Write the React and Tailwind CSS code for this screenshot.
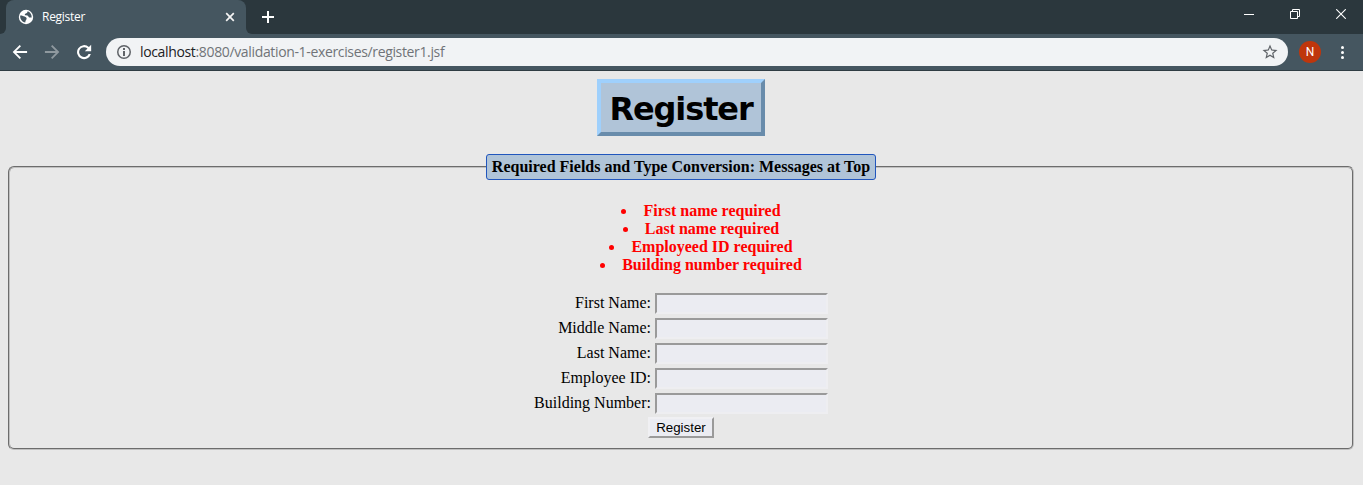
const messages = [
  'First name required',
  'Last name required',
  'Employeed ID required',
  'Building number required',
];

const fields = ['First Name:', 'Middle Name:', 'Last Name:', 'Employee ID:', 'Building Number:'];

function TabStrip() {
  return (
    <div className="flex h-[34px] items-stretch bg-[#2b373d]">
      <div className="flex w-1.5 items-end bg-[#455660]">
        <div className="h-full w-full rounded-br-md bg-[#2b373d]" />
      </div>
      <div className="flex w-60 items-center rounded-t-lg bg-[#455660] pr-[11px] pl-3">
        <svg className="h-4 w-4" viewBox="0 0 16 16">
          <circle cx="8" cy="8" r="7.2" fill="#fff" />
          <path
            d="M2.2 6.6 C4 6.4 5.4 7.3 6.6 7.6 C8 8 8.8 8.8 8.6 10 C8.4 11 7.4 11 7.3 13.6 C4 13.1 1.8 10 2.2 6.6Z M9.6 2.3 C9.6 4 8.4 4.5 6.8 5 L7 6.3 C8.4 6.4 10 6.4 10.4 7.4 C10.8 8.6 12.4 8.8 13.7 8.4 C13.8 5.3 12 3 9.6 2.3Z"
            fill="#455660"
          />
        </svg>
        <span className="ml-2 flex-1 font-['Open_Sans','Noto_Sans',sans-serif] text-[12px] tracking-[-0.27px] text-white">
          Register
        </span>
        <svg className="h-2.5 w-2.5" viewBox="0 0 10 10" stroke="#f5f5f5" strokeWidth="1.7">
          <path d="M1.2 1.2 8.8 8.8M8.8 1.2 1.2 8.8" />
        </svg>
      </div>
      <div className="flex w-1.5 bg-[#455660]">
        <div className="h-full w-full rounded-bl-md bg-[#2b373d]" />
      </div>
      <svg className="mt-[11px] ml-[10px] h-3 w-3" viewBox="0 0 12 12" fill="#fff">
        <path d="M5 0h2v5h5v2H7v5H5V7H0V5h5z" />
      </svg>
      <div className="flex-1" />
      <div className="flex items-start">
        <div className="mt-[14px] mr-9 h-px w-2.5 bg-white" />
        <svg className="mt-[9px] mr-9 h-2.5 w-2.5" viewBox="0 0 10 10" fill="none" stroke="#fff">
          <path d="M.5 2.5h7v7h-7zM2.5 2.5v-2h7v7h-2" />
        </svg>
        <svg className="mt-[9px] mr-[17px] h-2.5 w-2.5" viewBox="0 0 10 10" stroke="#fff" strokeWidth="1.1">
          <path d="M.2.2l9.6 9.6M9.8.2.2 9.8" />
        </svg>
      </div>
    </div>
  );
}

function Toolbar() {
  return (
    <div className="flex h-[37px] items-center border-b border-[#2f3c43] bg-[#455660]">
      <svg className="ml-[10px] h-5 w-5" viewBox="0 0 24 24" fill="#fff">
        <path d="M20.5 10.9H7.5l5.7-5.7L11.6 3.6 3.2 12l8.4 8.4 1.6-1.6-5.7-5.7h13z" />
      </svg>
      <svg className="ml-3 h-5 w-5" viewBox="0 0 24 24" fill="#8f999f">
        <path d="M3.5 10.9h13l-5.7-5.7 1.6-1.6 8.4 8.4-8.4 8.4-1.6-1.6 5.7-5.7h-13z" />
      </svg>
      <svg className="ml-3 h-5 w-5" viewBox="0 0 24 24" fill="#fff">
        <path d="M17.9 6.1A8.4 8.4 0 1 0 20.2 14.3h-2.7a5.9 5.9 0 1 1-1.3-6.4L13 11.1h7.6V3.4z" />
      </svg>
      <div className="ml-3 flex h-7 w-[1182px] items-center rounded-full bg-[#f1f3f5] pr-[9px] pl-[10px]">
        <svg className="h-4 w-4" viewBox="0 0 16 16" fill="#5f6368">
          <path d="M8 1a7 7 0 1 0 0 14A7 7 0 0 0 8 1zm0 1.5a5.5 5.5 0 1 1 0 11A5.5 5.5 0 0 1 8 2.5z" />
          <path d="M7 4h2v2H7zM7 7h2v5H7z" />
        </svg>
        <span className="ml-2 flex-1 pb-px font-['Open_Sans','Noto_Sans',sans-serif] text-[14px] tracking-[-0.35px] text-[#707378]">
          <span className="text-[#202124]">localhost</span>:8080/validation-1-exercises/register1.jsf
        </span>
        <svg className="h-[18px] w-[18px]" viewBox="0 0 24 24" fill="#5f6368">
          <path d="M22 9.24l-7.19-.62L12 2 9.19 8.63 2 9.24l5.46 4.73L5.82 21 12 17.27 18.18 21l-1.63-7.03L22 9.24zM12 15.4l-3.76 2.27 1-4.28-3.32-2.88 4.38-.38L12 6.1l1.71 4.04 4.38.38-3.32 2.88 1 4.28L12 15.4z" />
        </svg>
      </div>
      <div className="ml-[11px] flex h-[22px] w-[22px] items-center justify-center rounded-full bg-[#bf360c] font-[Roboto,sans-serif] text-[12px] text-white">
        N
      </div>
      <div className="ml-[20px] flex flex-col gap-[2px]">
        <div className="h-[3px] w-[3px] rounded-full bg-white" />
        <div className="h-[3px] w-[3px] rounded-full bg-white" />
        <div className="h-[3px] w-[3px] rounded-full bg-white" />
      </div>
    </div>
  );
}

function RegisterForm() {
  return (
    <fieldset className="mt-[18px] ml-2 h-[296px] w-[1346px] rounded-md border-2 border-[#c0c0c0] [border-style:groove]">
      <legend className="mx-auto flex h-[26px] w-[390px] items-center justify-center rounded-[3px] border border-[#2156bd] bg-[#b0c4d8] font-bold whitespace-nowrap">
        Required Fields and Type Conversion: Messages at Top
      </legend>
      <ul className="mt-[22px] list-inside list-disc pl-10 text-center leading-[18px] font-bold text-[#f00]">
        {messages.map((message) => (
          <li key={message}>{message}</li>
        ))}
      </ul>
      <div className="mt-[19px] flex flex-col gap-1">
        {fields.map((field) => (
          <label key={field} className="flex h-[21px] items-center">
            <span className="w-[641px] pb-0.5 text-right">{field}</span>
            <input
              type="text"
              className="ml-1 h-[21px] w-[173px] border-2 border-t-[#9a9a9a] border-r-[#eeeef1] border-b-[#eeeef1] border-l-[#9a9a9a] bg-[#ebecf2] px-1 text-[13px] outline-none"
            />
          </label>
        ))}
      </div>
      <button
        type="button"
        className="mx-auto mt-[3px] flex h-[21px] w-[66px] items-center justify-center border-2 border-t-[#f0f0f3] border-r-[#9a9a9a] border-b-[#9a9a9a] border-l-[#f0f0f3] bg-[#ebecf2] font-['Liberation_Sans',sans-serif] text-[13.33px]"
      >
        Register
      </button>
    </fieldset>
  );
}

export default function App() {
  return (
    <div className="h-[485px] overflow-hidden bg-[#e8e8e8] font-['Liberation_Serif',serif] text-[16px] text-black">
      <TabStrip />
      <Toolbar />
      <h1 className="mt-2 ml-[597px] flex h-[57px] w-[168px] items-center justify-center border-4 border-t-[#9fd0fc] border-r-[#698cab] border-b-[#698cab] border-l-[#9fd0fc] bg-[#b0c4d8] pt-0.5 font-['DejaVu_Sans',sans-serif] text-[32px] font-bold tracking-[-1.1px]">
        Register
      </h1>
      <RegisterForm />
    </div>
  );
}
